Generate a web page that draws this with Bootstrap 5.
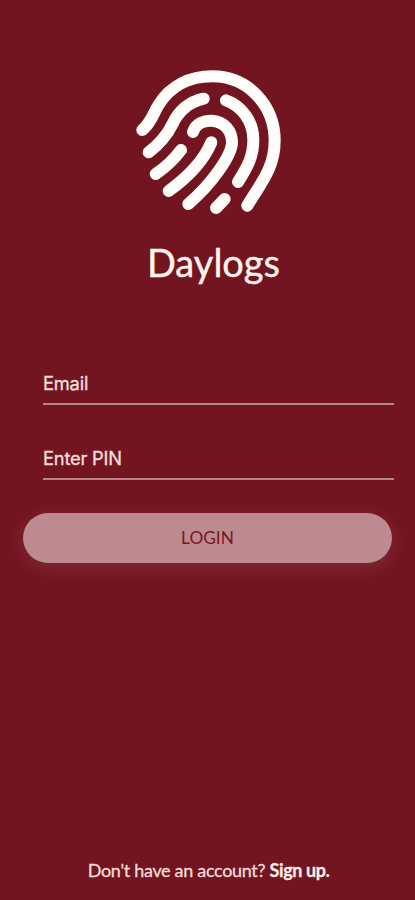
<!DOCTYPE html>
<html lang="en">
<head>
<meta charset="utf-8">
<meta name="viewport" content="width=device-width, initial-scale=1">
<title>Daylogs</title>
<link href="https://cdn.jsdelivr.net/npm/bootstrap@5.3.0/dist/css/bootstrap.min.css" rel="stylesheet">
<style>
body { background: #731521; color: #fbeee9; font-family: Lato, sans-serif; }
.screen { height: 900px; padding: 60px 21px 18px 23px; overflow: hidden; }
.logo { width: 170px; height: 165px; margin-left: 2px; }
.brand-name { font-size: 38px; line-height: 48px; margin: 13px 0 0 10px; color: #fff3ec; -webkit-text-stroke: .4px #fff3ec; }
.login-form { margin-top: 75px; }
.field-line { width: 351px; height: 44px; margin-left: 20px; font: 18.3px/44px Inter, sans-serif; letter-spacing: -.2px; padding: 2px 0 0; color: #f3dcda; background: transparent; border: 0; border-bottom: 2px solid #b6858a; border-radius: 0; -webkit-text-stroke: .35px #f3dcda; }
.field-line::placeholder { color: #f3dcda; opacity: 1; }
.field-line:focus { background: transparent; color: #fff; box-shadow: none; border-color: #fff; }
.field-line + .field-line { margin-top: 31px; }
.login-btn { width: 369px; height: 50px; margin-top: 33px; font-size: 17.3px; line-height: 50px; padding: 0; color: #7c1727; background: #bc8a8f; border: 0; box-shadow: 0 4px 18px rgba(188,138,143,.2); }
.login-btn:hover { color: #7c1727; background: #c6989c; }
.signup { font-size: 18px; line-height: 24px; letter-spacing: -.31px; color: #f3dcd8; -webkit-text-stroke: .3px #f3dcd8; }
.signup a { color: #fff3ec; letter-spacing: -.42px; }
</style>
<script src="https://cdn.jsdelivr.net/npm/bootstrap@5.3.0/dist/js/bootstrap.bundle.min.js"></script>
</head>
<body>
<main class="screen d-flex flex-column align-items-center">
  <svg class="logo flex-shrink-0" viewBox="0 0 510 495" fill="none" stroke="#fffdf9" stroke-width="36" stroke-linecap="round" aria-hidden="true">
    <path d="M52 210C82 184 84 160 101 134C137 77 195 49 262 49C370 49 449 137 449 242C449 320 413 362 367 437"/>
    <path d="M71 277C106 250 126 226 142 193C160 155 190 126 236 116"/>
    <path d="M303 121C351 138 385 185 385 240C385 290 368 320 339 366"/>
    <path d="M204 216C212 190 238 181 260 182C298 184 321 213 321 247C321 285 262 370 190 432"/>
    <path d="M259 247C235 305 190 350 131 393"/>
    <path d="M168 270C147 298 122 322 92 342"/>
    <path d="M299 417L273 444"/>
  </svg>
  <h1 class="brand-name fw-normal">Daylogs</h1>
  <form class="login-form w-100 d-flex flex-column">
    <input class="form-control field-line" type="email" placeholder="Email" aria-label="Email">
    <input class="form-control field-line" type="password" placeholder="Enter PIN" aria-label="Enter PIN">
    <button class="btn rounded-pill login-btn" type="button">LOGIN</button>
  </form>
  <p class="signup mt-auto mb-0">Don't have an account? <a class="fw-bold text-decoration-none" href="#">Sign up.</a></p>
</main>
</body>
</html>
